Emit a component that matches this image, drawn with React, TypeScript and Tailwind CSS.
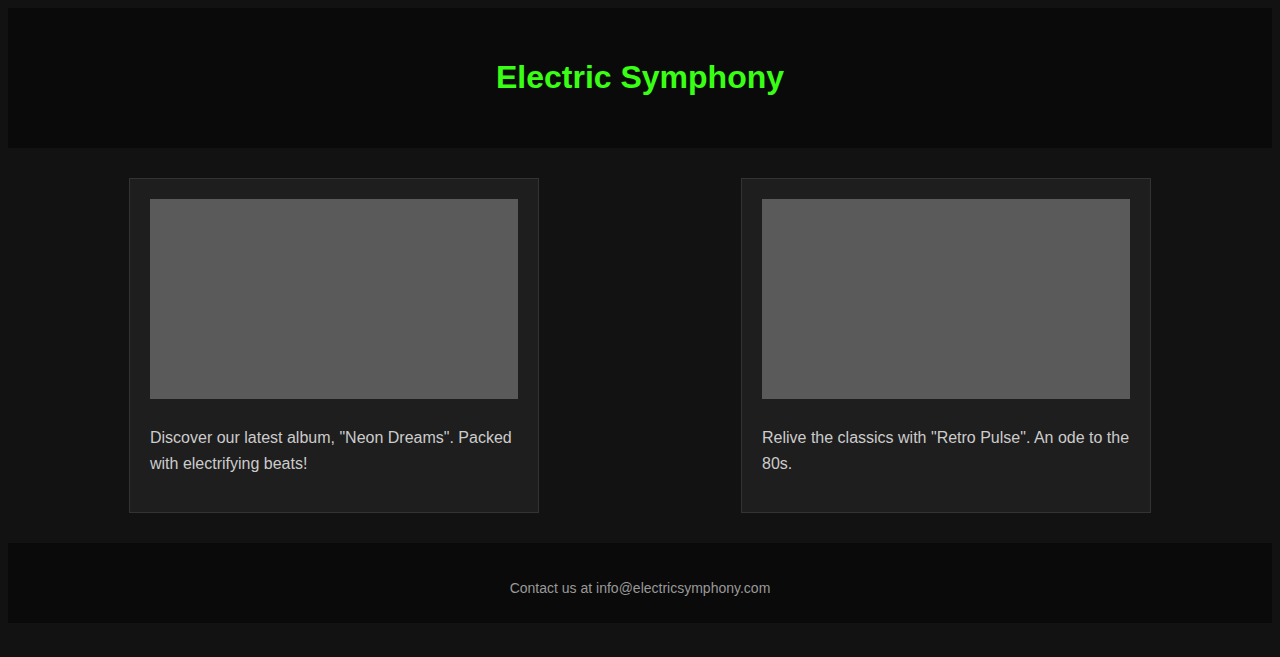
export default function App() {
  const cards = [
    'Discover our latest album, "Neon Dreams". Packed with electrifying beats!',
    'Relive the classics with "Retro Pulse". An ode to the 80s.',
  ];
  return (
    <div
      className="min-h-screen bg-[#121212] p-2"
      style={{ fontFamily: '"Liberation Sans", Arial, sans-serif' }}
    >
      <header className="flex h-[140px] items-center justify-center bg-[#0a0a0a] pb-[2px]">
        <h1 className="text-[32px] font-bold leading-[37px] text-[#39ff14]">
          Electric Symphony
        </h1>
      </header>
      <main className="flex justify-around px-5 py-[30px]">
        {cards.map((t, i) => (
          <div
            key={i}
            className="w-[410px] border border-[#333] bg-[#1e1e1e] px-5 pt-5 pb-5"
          >
            <div className="h-[200px] w-full bg-[#5a5a5a]" />
            <p className="mt-[26px] mb-4 text-base leading-[1.6] text-[#cccccc]">
              {t}
            </p>
          </div>
        ))}
      </main>
      <footer className="h-[80px] bg-[#0a0a0a] pt-[37px] text-center">
        <p className="text-sm leading-4 text-[#999999]">
          Contact us at info@electricsymphony.com
        </p>
      </footer>
    </div>
  );
}
